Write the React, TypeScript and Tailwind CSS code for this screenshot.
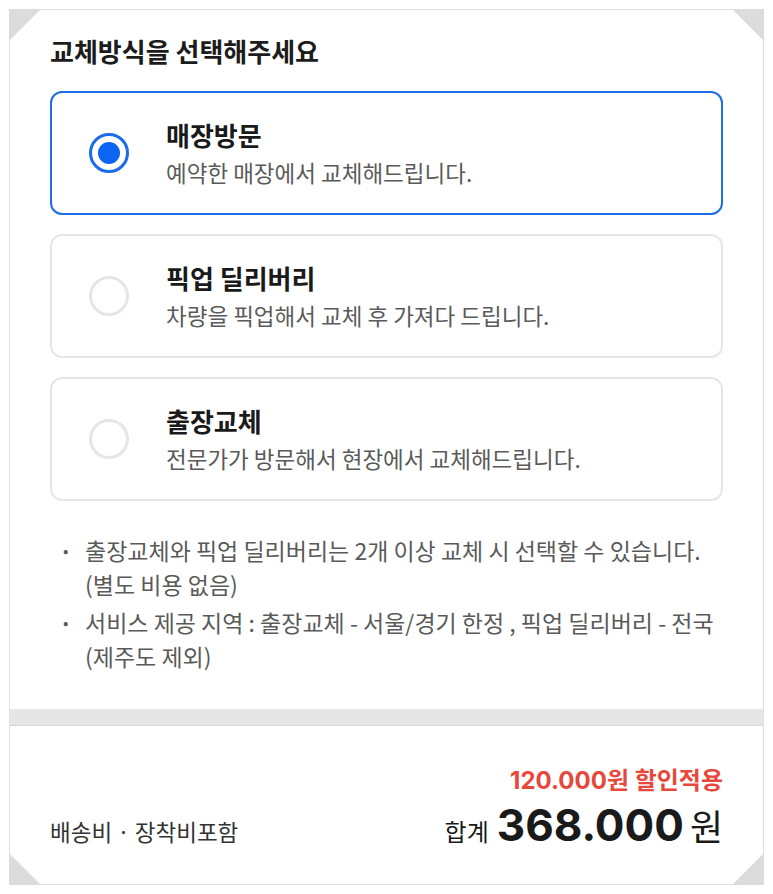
import { useState } from 'react';

// Exchange method options
const METHODS = [
  { id: 'store', title: '매장방문', desc: '예약한 매장에서 교체해드립니다.' },
  { id: 'pickup', title: '픽업 딜리버리', desc: '차량을 픽업해서 교체 후 가져다 드립니다.' },
  { id: 'visit', title: '출장교체', desc: '전문가가 방문해서 현장에서 교체해드립니다.' },
];

const NOTES = [
  '출장교체와 픽업 딜리버리는 2개 이상 교체 시 선택할 수 있습니다. (별도 비용 없음)',
  '서비스 제공 지역 : 출장교체 - 서울/경기 한정 , 픽업 딜리버리 - 전국 (제주도 제외)',
];

function Corner({ className, points }: { className: string; points: string }) {
  return (
    <svg className={`absolute h-[32px] w-[32px] ${className}`} viewBox="0 0 32 32">
      <polygon points={points} fill="#dcdcdc" />
    </svg>
  );
}

function Radio({ checked }: { checked: boolean }) {
  return (
    <div
      className={`flex h-[40px] w-[40px] shrink-0 items-center justify-center rounded-full border-[3px] ${
        checked ? 'border-[#1b6bea]' : 'border-[#e6e6e6]'
      }`}
    >
      {checked && <div className="h-[22px] w-[22px] rounded-full bg-[#0c64f2]" />}
    </div>
  );
}

export default function App() {
  const [selected, setSelected] = useState('store');

  return (
    <div className="h-[894px] w-[773px] bg-white p-[9px] font-['Noto_Sans_CJK_KR',sans-serif]">
      <div className="relative flex h-full flex-col border border-[#e0e0e0] bg-white">
        {/* corner folds */}
        <Corner className="-left-px -top-px" points="0,0 32,0 0,32" />
        <Corner className="-right-px -top-px" points="0,0 32,0 32,32" />
        <Corner className="-bottom-px -left-px" points="0,0 0,32 32,32" />
        <Corner className="-bottom-px -right-px" points="32,0 32,32 0,32" />

        {/* Options */}
        <div className="px-[40px] pb-[36px] pt-[27px]">
          <h2 className="mb-[26px] text-[26px] font-bold leading-[28px] text-[#1c1c1c]">
            교체방식을 선택해주세요
          </h2>

          <div className="flex flex-col gap-[19px]">
            {METHODS.map((m) => {
              const checked = selected === m.id;
              return (
                <button
                  key={m.id}
                  type="button"
                  onClick={() => setSelected(m.id)}
                  className={`flex h-[124px] items-center gap-[37px] rounded-[12px] border-2 pl-[37px] text-left ${
                    checked ? 'border-[#1e6de6]' : 'border-[#e6e6e6]'
                  }`}
                >
                  <Radio checked={checked} />
                  <div className="flex flex-col gap-[7px]">
                    <span className="text-[26px] font-bold leading-[30px] text-[#1a1a1a]">
                      {m.title}
                    </span>
                    <span className="text-[22.5px] leading-[30px] text-[#5a5a5a]">{m.desc}</span>
                  </div>
                </button>
              );
            })}
          </div>

          {/* Notes */}
          <ul className="mr-[-12px] mt-[32px] flex flex-col gap-[4px] text-[23px] leading-[34px] text-[#5a5a5a]">
            {NOTES.map((note) => (
              <li key={note} className="flex">
                <span className="w-[35px] shrink-0 pl-[13px] text-[16px]">•</span>
                <span className="break-keep">{note}</span>
              </li>
            ))}
          </ul>
        </div>

        <div className="h-[17px] border-b border-[#d6d6d6] bg-[#e6e6e6]" />

        {/* Total */}
        <div className="flex flex-1 items-end justify-between px-[40px] pb-[37px]">
          <span className="mb-[5px] text-[22.5px] leading-none text-[#333333]">배송비 · 장착비포함</span>
          <div className="flex flex-col items-end">
            <span className="mb-[8px] font-['Inter','Noto_Sans_CJK_KR',sans-serif] text-[24px] font-bold leading-[28px] text-[#e8473b]">
              120.000원 할인적용
            </span>
            <div className="flex items-baseline text-[#1a1a1a]">
              <span className="mr-[8px] text-[24px] leading-none">합계</span>
              <span className="mr-[6px] font-['Inter',sans-serif] text-[44px] font-bold leading-none">
                368.000
              </span>
              <span className="text-[36px] leading-none">원</span>
            </div>
          </div>
        </div>
      </div>
    </div>
  );
}
